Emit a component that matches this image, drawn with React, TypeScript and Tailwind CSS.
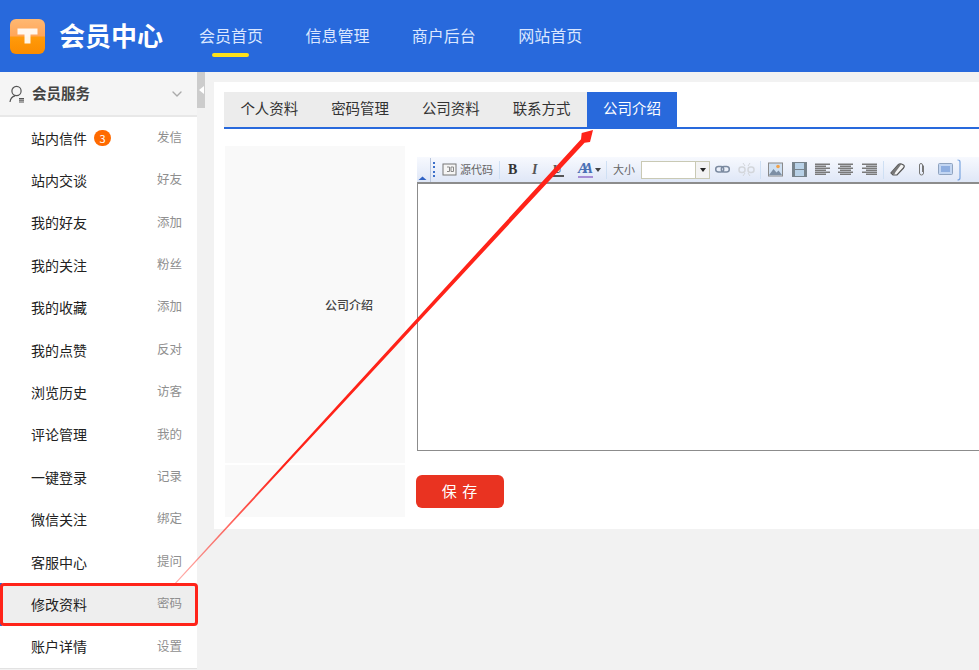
import React from "react";
import { ChevronDown } from "lucide-react";

const font = { fontFamily: '"Noto Sans CJK SC", "Liberation Sans", sans-serif' };

const menu = [
  ["站内信件", "发信"],
  ["站内交谈", "好友"],
  ["我的好友", "添加"],
  ["我的关注", "粉丝"],
  ["我的收藏", "添加"],
  ["我的点赞", "反对"],
  ["浏览历史", "访客"],
  ["评论管理", "我的"],
  ["一键登录", "记录"],
  ["微信关注", "绑定"],
  ["客服中心", "提问"],
  ["修改资料", "密码"],
  ["账户详情", "设置"],
];

function Header() {
  return (
    <header className="flex h-[72px] items-center bg-[#2869dc]">
      <div className="ml-[10px] flex h-[35px] w-[35px] items-center justify-center rounded-[6px] bg-[linear-gradient(#ffb872_0%,#ffa65a_48%,#ff9a0a_52%,#fb8c00_100%)]">
        <svg width="21" height="16" viewBox="0 0 21 16">
          <path d="M0.5 0.5h20v6h-7v9h-6v-9h-7z" fill="#fff" opacity="0.9" />
        </svg>
      </div>
      <div className="ml-[14px] w-[140px] -translate-y-px text-[26px] leading-none font-bold text-white">会员中心</div>
      <nav className="flex -translate-y-px gap-[42.4px] text-[16px] text-[#dbe7ff]">
        {["会员首页", "信息管理", "商户后台", "网站首页"].map((item, i) => (
          <div key={item} className="relative w-[64px] whitespace-nowrap">
            {item}
            {i === 0 && <div className="absolute top-[30px] left-[13px] h-[4px] w-[37px] rounded-full bg-[#ffe11a]" />}
          </div>
        ))}
      </nav>
    </header>
  );
}

function Sidebar() {
  return (
    <aside className="w-[197px] shrink-0 border-b border-[#e2e2e2] bg-white pb-0">
      <div className="flex h-[45px] items-center border-b-2 border-[#e8e8e8] bg-[#f5f5f5] pr-[12px] pl-[9px]">
        <svg width="18" height="18" viewBox="0 0 18 18" fill="none" stroke="#555" strokeWidth="1.2">
          <circle cx="7.5" cy="6" r="4.6" />
          <path d="M1 17c.4-3.6 2.4-5.6 5-6.2M4 11" />
          <path d="M10 13.5h5M10 15.2h5M10 17h5" />
        </svg>
        <span className="ml-[5px] -translate-y-px text-[14.5px] font-bold text-[#444]">会员服务</span>
        <ChevronDown className="ml-auto text-[#aaa]" size={16} />
      </div>
      {menu.map(([name, sub], i) => (
        <div
          key={name}
          className={
            i === 11
              ? "flex h-[42.4px] items-center border-l-2 border-[#2869dc] bg-[#eeeeee] pr-[15px] pl-[29px]"
              : "flex h-[42.4px] items-center pr-[15px] pl-[31px]"
          }
        >
          <span className="text-[14px] text-[#222]">{name}</span>
          {i === 0 && (
            <span className="ml-[7px] flex h-[16px] w-[17px] items-center justify-center rounded-full bg-[#ff6a00] text-[11px] text-white">
              3
            </span>
          )}
          <span className="ml-auto -translate-y-px text-[12.5px] text-[#8f8f8f]">{sub}</span>
        </div>
      ))}
    </aside>
  );
}

function Sep() {
  return <div className="h-[18px] w-px bg-[#cfe0f4]" />;
}

function Glyph({ children, w = 15 }: { children: React.ReactNode; w?: number }) {
  return (
    <svg width={w} height="15" viewBox={`0 0 ${w} 15`} className="shrink-0">
      {children}
    </svg>
  );
}

function AlignIcon({ mode }: { mode: "left" | "center" | "right" }) {
  const rows = [1.5, 3.5, 5.5, 7.5, 9.5, 11.5];
  return (
    <Glyph>
      {rows.map((y, i) => {
        const w = i % 2 === 0 ? 15 : 11;
        const x = mode === "left" ? 0 : mode === "center" ? (15 - w) / 2 : 15 - w;
        return <rect key={y} x={x} y={y} width={w} height="1.5" fill="#7a7a7a" />;
      })}
    </Glyph>
  );
}

function Toolbar() {
  return (
    <div className="flex h-[25px] w-[600px] items-center bg-gradient-to-b from-[#f7f9fe] to-[#dfe7f7] text-[#555]">
      <svg width="11" height="24" viewBox="0 0 11 24" className="shrink-0">
        <path d="M1.5 22l4-3.5 4 3.5z" fill="#2f62c4" />
      </svg>
      <div className="ml-[2px] h-[24px] w-px bg-[#b9c6dc]" />
      <div className="ml-[2px] flex h-[18px] w-[2px] flex-col justify-between py-px">
        <i className="h-[2px] w-[2px] bg-[#3b6fc9]" />
        <i className="h-[2px] w-[2px] bg-[#3b6fc9]" />
        <i className="h-[2px] w-[2px] bg-[#3b6fc9]" />
        <i className="h-[2px] w-[2px] bg-[#3b6fc9]" />
      </div>
      <div className="ml-[7px]">
        <Glyph>
          <rect x="1" y="2" width="13" height="11" fill="#f5f5f5" stroke="#777" />
          <path d="M5 5h2.500v4.500h-2.500M9 5h2.500v4.500h-2.500z" fill="none" stroke="#888" />
        </Glyph>
      </div>
      <span className="ml-[3px] text-[11px] text-[#666]">源代码</span>
      <div className="mr-[8px] ml-[6px]"><Sep /></div>
      <span className="w-[11px] font-['Liberation_Serif'] text-[14px] leading-none font-bold text-[#333]">B</span>
      <span className="ml-[13px] w-[10px] font-['Liberation_Serif'] text-[14px] leading-none font-bold text-[#555] italic">I</span>
      <span className="ml-[11px] w-[11px] border-b-2 border-[#555] font-['Liberation_Serif'] text-[12px] leading-none font-bold text-[#555]">U</span>
      <span className="ml-[14px] w-[15px] border-b-2 border-[#a78ed6] font-['Liberation_Serif'] text-[15px] leading-none font-bold tracking-[-5px] whitespace-nowrap text-[#4a6fb5] italic">AA</span>
      <svg width="6" height="4" viewBox="0 0 6 4" className="ml-[2px] shrink-0">
        <path d="M0 0h6L3 4z" fill="#444" />
      </svg>
      <div className="ml-[5px]"><Sep /></div>
      <span className="ml-[6px] w-[23px] text-[11px] text-[#666]">大小</span>
      <div className="ml-[5px] flex h-[18px] w-[69px] border border-[#c9c9b4] bg-white">
        <div className="flex-1" />
        <div className="flex w-[14px] items-center justify-center border-l border-[#c9c9b4] bg-[#f3f3f3]">
          <svg width="6" height="4" viewBox="0 0 6 4">
            <path d="M0 0h6L3 4z" fill="#222" />
          </svg>
        </div>
      </div>
      <div className="ml-[5px]">
        <Glyph>
          <rect x="0.700" y="4.500" width="8" height="5.500" rx="2.700" fill="none" stroke="#7b8aa0" strokeWidth="1.500" />
          <rect x="6.300" y="4.500" width="8" height="5.500" rx="2.700" fill="none" stroke="#7b8aa0" strokeWidth="1.500" />
        </Glyph>
      </div>
      <div className="ml-[8px]">
        <Glyph w={17}>
          <rect x="1" y="5" width="6" height="5.500" rx="2.500" fill="none" stroke="#d3d6db" strokeWidth="1.500" />
          <rect x="10" y="5" width="6" height="5.500" rx="2.500" fill="none" stroke="#d3d6db" strokeWidth="1.500" />
          <path d="M5 1l2 3M12 1l-2 3M5 14l2-3M12 14l-2-3" stroke="#d3d6db" />
        </Glyph>
      </div>
      <div className="ml-[5px]"><Sep /></div>
      <div className="ml-[7px]">
        <Glyph>
          <rect x="0.500" y="1" width="14" height="13" fill="#cfe0f2" stroke="#8a8a8a" />
          <path d="M1 13l4.500-6 3 3.500 2-2 3.500 4.500z" fill="#7d8fa5" />
          <circle cx="10" cy="4.500" r="1.800" fill="#f2a24a" />
        </Glyph>
      </div>
      <div className="ml-[9px]">
        <Glyph>
          <rect x="0" y="0" width="15" height="15" fill="#77838c" />
          <rect x="3" y="1" width="9" height="6" fill="#b9d2e8" />
          <rect x="3" y="8" width="9" height="6" fill="#b9d2e8" />
        </Glyph>
      </div>
      <div className="ml-[8px]"><AlignIcon mode="left" /></div>
      <div className="ml-[8px]"><AlignIcon mode="center" /></div>
      <div className="ml-[9px]"><AlignIcon mode="right" /></div>
      <div className="ml-[6px]"><Sep /></div>
      <div className="ml-[6px]">
        <Glyph>
          <path d="M1 11L8 3q1.500-1.500 3.500-1l2 1q1.500 1 0 3L7 13H3z" fill="#f4f4f4" stroke="#555" strokeWidth="1.200" />
          <path d="M1 11L8 3q1.500-1.500 3.500-1l-6 8-1.500 3z" fill="#777" />
        </Glyph>
      </div>
      <div className="ml-[13px]">
        <Glyph w={7}>
          <path d="M5.500 3.500v7.500a2 2 0 0 1-4 0V3a1.500 1.500 0 0 1 3 0v7" fill="none" stroke="#777" />
        </Glyph>
      </div>
      <div className="ml-[13px]">
        <Glyph>
          <rect x="0.500" y="1.500" width="14" height="11" rx="1" fill="#c3d6f2" stroke="#8fa3bf" />
          <rect x="3" y="4" width="9" height="6" fill="#8eaee0" />
        </Glyph>
      </div>
      <svg width="4" height="22" viewBox="0 0 4 22" className="ml-[4px] shrink-0">
        <path d="M0.500 1q2.500 0 2.500 2v16q0 2-2.500 2" fill="none" stroke="#7aa5e0" strokeWidth="1.200" />
      </svg>
    </div>
  );
}

function Panel() {
  return (
    <div className="mt-[10px] ml-[9px] h-[447px] w-[765px] bg-white pt-[10px] pl-[10px]">
      <div className="flex h-[37px] w-[755px] border-b-2 border-[#2869dc] text-[14.5px] text-[#333]">
        <div className="flex w-[363px] bg-[#ececec]">
          {["个人资料", "密码管理", "公司资料", "联系方式"].map((tab) => (
            <div key={tab} className="flex flex-1 items-center justify-center pb-[3px]">
              {tab}
            </div>
          ))}
        </div>
        <div className="flex w-[90px] items-center justify-center bg-[#2869dc] pb-[3px] text-white">公司介绍</div>
      </div>
      <div className="mt-[17px] ml-px flex">
        <div className="flex w-[180px] shrink-0 flex-col gap-[2px]">
          <div className="flex h-[317px] items-center justify-end bg-[#f9f9f9] pr-[32px] text-[12px] font-medium text-[#444]">
            公司介绍
          </div>
          <div className="h-[52px] bg-[#f9f9f9]" />
        </div>
        <div className="ml-[11px] flex-1 overflow-hidden">
          <div className="ml-px pt-[11px]">
            <Toolbar />
            <div className="h-[269px] w-[600px] border-t-2 border-b border-l border-[#8c8c8c] bg-white" />
          </div>
          <button className="mt-[24px] h-[33px] w-[88px] rounded-[6px] bg-[#e93321] text-[15px] tracking-[1px] text-white">
            保 存
          </button>
        </div>
      </div>
    </div>
  );
}

export default function App() {
  return (
    <div className="relative h-[670px] w-[979px] overflow-hidden bg-[#f2f2f2]" style={font}>
      <Header />
      <div className="flex">
        <Sidebar />
        <div className="flex h-[36px] w-[8px] shrink-0 items-center justify-center bg-[#cccccc]">
          <svg width="5" height="8" viewBox="0 0 5 8">
            <path d="M5 0v8L0 4z" fill="#fff" />
          </svg>
        </div>
        <Panel />
      </div>

      {/* annotation drawn over the page */}
      <div className="absolute top-[583px] left-0 h-[43px] w-[198px] rounded-[4px] border-[3px] border-[#ff2319]" />
      <svg className="pointer-events-none absolute top-0 left-0" width="979" height="670" viewBox="0 0 979 670">
        <defs>
          <linearGradient id="tail" gradientUnits="userSpaceOnUse" x1="175" y1="583" x2="593" y2="130">
            <stop offset="0" stopColor="#ff2319" stopOpacity="0.35" />
            <stop offset="0.25" stopColor="#ff2319" stopOpacity="1" />
            <stop offset="1" stopColor="#ff2319" />
          </linearGradient>
        </defs>
        <path d="M174 584L581 139.300L581.700 133L593 130L590 142L584.600 142.700L175.500 584Z" fill="url(#tail)" />
      </svg>
    </div>
  );
}
